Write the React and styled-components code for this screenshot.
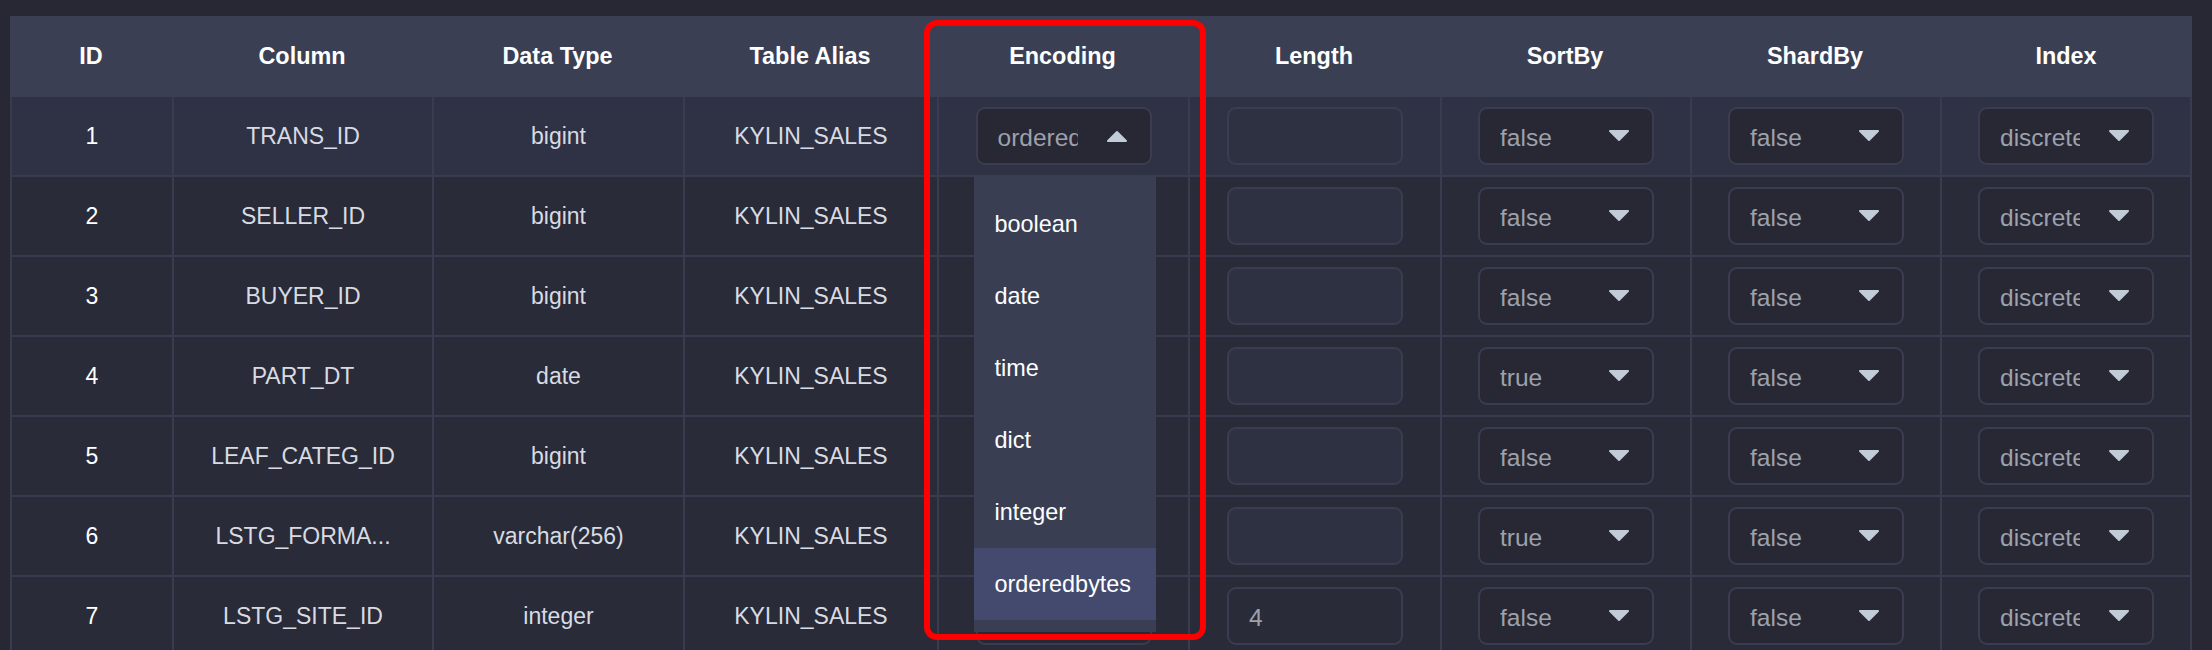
import React from "react";
import styled, { createGlobalStyle } from "styled-components";

const Global = createGlobalStyle`
  html, body {
    margin: 0;
    padding: 0;
    background: #272833;
    height: 650px;
    overflow: hidden;
  }
  * { box-sizing: border-box; }
`;

const COLS = [162, 260, 251, 254, 251, 252, 250, 250, 252];
const HEADERS = ["ID", "Column", "Data Type", "Table Alias", "Encoding", "Length", "SortBy", "ShardBy", "Index"];

const ROWS = [
  { id: 1, col: "TRANS_ID", type: "bigint", len: "", sort: "false", shard: "false", active: true },
  { id: 2, col: "SELLER_ID", type: "bigint", len: "", sort: "false", shard: "false" },
  { id: 3, col: "BUYER_ID", type: "bigint", len: "", sort: "false", shard: "false" },
  { id: 4, col: "PART_DT", type: "date", len: "", sort: "true", shard: "false" },
  { id: 5, col: "LEAF_CATEG_ID", type: "bigint", len: "", sort: "false", shard: "false" },
  { id: 6, col: "LSTG_FORMA...", type: "varchar(256)", len: "", sort: "true", shard: "false" },
  { id: 7, col: "LSTG_SITE_ID", type: "integer", len: "4", sort: "false", shard: "false", enabled: true },
];

const MENU = ["boolean", "date", "time", "dict", "integer", "orderedbytes"];

const Page = styled.div`
  padding: 16px 0 0 10px;
  font-family: "Liberation Sans", Arial, Helvetica, sans-serif;
`;

const Table = styled.div`
  position: relative;
  width: 2182px;
`;

const Grid = styled.div`
  display: grid;
  grid-template-columns: ${COLS.map((c) => c + "px").join(" ")};
`;

const HeadCell = styled.div`
  height: 81px;
  background: #3a3f54;
  color: #ffffff;
  font-weight: 700;
  font-size: 23.4px;
  display: flex;
  align-items: center;
  justify-content: center;
`;

const Cell = styled.div`
  height: 80px;
  background: ${(p) => (p.$active ? "#2f3244" : "#292b39")};
  border-left: 2px solid #393c4f;
  border-right: ${(p) => (p.$last ? "2px solid #393c4f" : "0")};
  border-bottom: 2px solid #393c4f;
  color: ${(p) => (p.$strong ? "#ffffff" : "#d8dbe2")};
  font-size: 23px;
  display: flex;
  align-items: center;
  justify-content: center;
  white-space: nowrap;
`;

const SelectWrap = styled.div`
  position: relative;
`;

const SelectBox = styled.div`
  width: 176px;
  height: 58px;
  border: 2px solid #3a3d50;
  border-radius: 9px;
  background: #272834;
  display: flex;
  align-items: center;
  padding: 0 22px 0 20px;
  gap: 28px;
`;

const SelectText = styled.span`
  width: 80px;
  padding-top: 4px;
  overflow: hidden;
  white-space: nowrap;
  color: #9ea1ab;
  font-size: 24.5px;
`;

const LengthInput = styled.div`
  width: 176px;
  height: 58px;
  border: 2px solid #3a3d50;
  border-radius: 9px;
  background: ${(p) => (p.$enabled ? "#292b39" : "#2e3142")};
  display: flex;
  align-items: center;
  padding: 4px 20px 0;
  color: #9ea1ab;
  font-size: 24.5px;
`;

const Menu = styled.div`
  position: absolute;
  left: -2px;
  top: 69px;
  width: 182px;
  padding: 12px 0;
  background: #3a3e53;
  z-index: 5;
`;

const MenuItem = styled.div`
  height: 72px;
  display: flex;
  align-items: center;
  padding-left: 21px;
  font-size: 23.4px;
  color: #ffffff;
  background: ${(p) => (p.$selected ? "#434a6e" : "transparent")};
`;

const Highlight = styled.div`
  position: absolute;
  left: 914px;
  top: 4px;
  width: 282px;
  height: 620px;
  border: 6px solid #ff0000;
  border-radius: 13px;
  pointer-events: none;
  z-index: 10;
`;

function Arrow({ up }) {
  return (
    <svg width="22" height="12" viewBox="0 0 22 12" style={{ flex: "none" }}>
      <path
        d={up ? "M2 11 L20 11 L11 2 Z" : "M2 1 L20 1 L11 10 Z"}
        fill="#c2ccd9"
        stroke="#c2ccd9"
        strokeWidth="2"
        strokeLinejoin="round"
      />
    </svg>
  );
}

function Select({ value, open, children }) {
  return (
    <SelectWrap>
      <SelectBox>
        <SelectText>{value}</SelectText>
        <Arrow up={open} />
      </SelectBox>
      {children}
    </SelectWrap>
  );
}

export default function App() {
  return (
    <>
      <Global />
      <Page>
        <Table>
          <Grid>
            {HEADERS.map((h) => (
              <HeadCell key={h}>{h}</HeadCell>
            ))}
            {ROWS.map((r) => (
              <React.Fragment key={r.id}>
                <Cell $active={r.active} $strong>{r.id}</Cell>
                <Cell $active={r.active}>{r.col}</Cell>
                <Cell $active={r.active}>{r.type}</Cell>
                <Cell $active={r.active}>KYLIN_SALES</Cell>
                <Cell $active={r.active}>
                  <Select value="orderedbytes" open={r.active}>
                    {r.active && (
                      <Menu>
                        {MENU.map((m) => (
                          <MenuItem key={m} $selected={m === "orderedbytes"}>
                            {m}
                          </MenuItem>
                        ))}
                      </Menu>
                    )}
                  </Select>
                </Cell>
                <Cell $active={r.active}>
                  <LengthInput $enabled={r.enabled}>{r.len}</LengthInput>
                </Cell>
                <Cell $active={r.active}>
                  <Select value={r.sort} />
                </Cell>
                <Cell $active={r.active}>
                  <Select value={r.shard} />
                </Cell>
                <Cell $active={r.active} $last>
                  <Select value="discrete" />
                </Cell>
              </React.Fragment>
            ))}
          </Grid>
          <Highlight />
        </Table>
      </Page>
    </>
  );
}
